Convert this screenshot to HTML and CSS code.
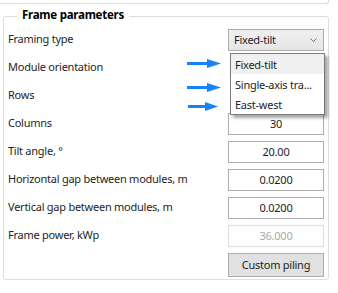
FILE: index.html
```html
<!DOCTYPE html>
<html>
<head>
<meta charset="utf-8">
<link rel="stylesheet" href="styles.css">
</head>
<body>
<div class="prev"></div>
<div class="group">
  <div class="group-title">Frame parameters</div>
  <div class="grid">
    <div class="label">Framing type</div>
    <div class="combo">
      <span>Fixed-tilt</span>
      <svg class="chev" width="7" height="4" viewBox="0 0 7 4"><polyline points="0.5,0.5 3.5,3.5 6.5,0.5" fill="none" stroke="#707070" stroke-width="1"/></svg>
      <div class="popup">
        <div class="item sel">Fixed-tilt</div>
        <div class="item">Single-axis tra...</div>
        <div class="item">East-west</div>
      </div>
    </div>
    <div class="label">Module orientation</div>
    <div class="spacer"></div>
    <div class="label">Rows</div>
    <div class="spacer"></div>
    <div class="label">Columns</div>
    <div class="box">30</div>
    <div class="label">Tilt angle, °</div>
    <div class="box">20.00</div>
    <div class="label">Horizontal gap between modules, m</div>
    <div class="box">0.0200</div>
    <div class="label">Vertical gap between modules, m</div>
    <div class="box">0.0200</div>
    <div class="label">Frame power, kWp</div>
    <div class="box disabled">36.000</div>
    <div class="label"></div>
    <div class="button">Custom piling</div>
  </div>
</div>
<svg class="arrows" width="338" height="293" viewBox="0 0 338 293">
  <g fill="#1684f5" stroke="none">
    <rect x="187" y="62" width="22" height="3"/>
    <polygon points="207,59 221,63.5 207,68"/>
    <rect x="187" y="86" width="22" height="3"/>
    <polygon points="207,83 221,87.5 207,92"/>
    <rect x="188" y="105" width="19" height="3"/>
    <polygon points="205,102 218,106.5 205,111"/>
  </g>
</svg>
</body>
</html>
```
FILE: styles.css
```css
html, body {
  margin: 0;
  padding: 0;
  background: #ffffff;
}
body {
  width: 338px;
  height: 293px;
  overflow: hidden;
  position: relative;
  font-family: "Noto Sans", "Open Sans", sans-serif;
  font-size: 11px;
  letter-spacing: -0.25px;
  color: #1e1e1e;
}
.prev {
  margin-left: -4px;
  width: 333px;
  height: 4px;
  box-sizing: border-box;
  border-right: 1px solid #d5dfe5;
  border-bottom: 1px solid #d5dfe5;
  border-bottom-right-radius: 3px;
}
.group {
  position: relative;
  margin: 12px 0 0 3px;
  width: 326px;
  box-sizing: border-box;
  border: 1px solid #d5dfe5;
  border-radius: 3px;
  padding: 12px 4px 4px 4px;
}
.group-title {
  position: absolute;
  left: 13px;
  top: -10px;
  padding: 0 5px;
  background: #ffffff;
  font-weight: bold;
  font-size: 11.5px;
  color: #000000;
  line-height: 16px;
}
.grid {
  display: grid;
  grid-template-columns: 1fr 96px;
  grid-auto-rows: 22px;
  row-gap: 6px;
}
.label {
  display: flex;
  align-items: center;
  padding-bottom: 3px;
  white-space: nowrap;
  line-height: 16px;
}
.combo {
  position: relative;
  box-sizing: border-box;
  border: 1px solid #acacac;
  background: linear-gradient(#f0f0f0, #e6e6e6);
  display: flex;
  align-items: center;
  justify-content: space-between;
  padding: 0 6px 1px 5px;
}
.chev {
  display: block;
}
.popup {
  position: absolute;
  left: 1px;
  top: 23px;
  width: 95px;
  box-sizing: border-box;
  border: 1px solid #7a7a7a;
  background: #ffffff;
  box-shadow: 3px 3px 3px rgba(0, 0, 0, 0.35);
  z-index: 2;
}
.item {
  height: 20px;
  display: flex;
  align-items: center;
  padding-left: 4px;
  white-space: nowrap;
}
.item.sel {
  background: #f0f0f0;
}
.box {
  box-sizing: border-box;
  border: 1px solid #abadb3;
  background: #ffffff;
  display: flex;
  align-items: center;
  justify-content: center;
  padding-bottom: 1px;
}
.box.disabled {
  border-color: #dcdcdc;
  color: #a8a8a8;
}
.button {
  box-sizing: border-box;
  border: 1px solid #adadad;
  background: #e1e1e1;
  display: flex;
  align-items: center;
  justify-content: center;
  padding-bottom: 1px;
  height: 24px;
}
.arrows {
  position: absolute;
  left: 0;
  top: 0;
  pointer-events: none;
}
```
